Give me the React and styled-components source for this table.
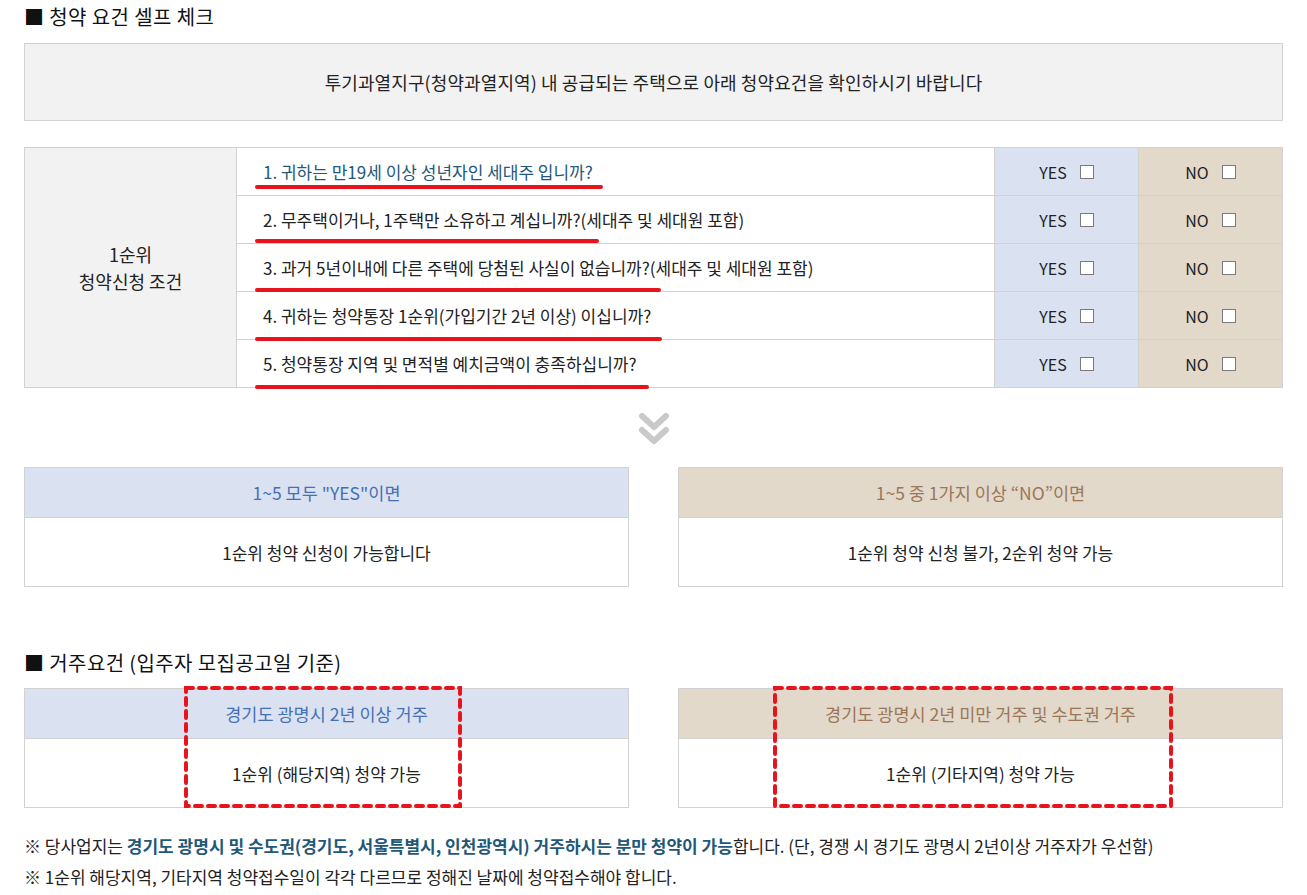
import React from "react";
import styled, { createGlobalStyle } from "styled-components";

const GlobalStyle = createGlobalStyle`
  html, body {
    margin: 0;
    padding: 0;
    background: #fff;
  }
  body {
    font-family: "Noto Sans CJK KR", "Noto Sans", sans-serif;
    color: #222;
  }
`;

const Page = styled.div`
  padding: 5px 24px 0;
  width: 1259px;
`;

const SectionTitle = styled.h2`
  margin: ${(p) => p.$top || 0}px 0 0;
  font-size: 20px;
  font-weight: 400;
  line-height: 24px;
  letter-spacing: 0.4px;
  color: #111;
`;

const Notice = styled.div`
  margin-top: 14px;
  height: 76px;
  display: flex;
  align-items: center;
  justify-content: center;
  background: #f2f2f2;
  border: 1px solid #d2d2d2;
  font-size: 18px;
  letter-spacing: 0.1px;
  color: #222;
`;

const Table = styled.div`
  margin-top: 26px;
  display: grid;
  grid-template-columns: 212px 1fr 144px 144px;
  grid-template-rows: repeat(5, 48px);
  border-top: 1px solid #d2d2d2;
  border-left: 1px solid #d2d2d2;
`;

const Cell = styled.div`
  border-right: 1px solid #d2d2d2;
  border-bottom: 1px solid #d2d2d2;
  display: flex;
  align-items: center;
  font-size: 17px;
`;

const GroupCell = styled(Cell)`
  grid-row: 1 / span 5;
  flex-direction: column;
  justify-content: center;
  background: #f2f2f2;
  font-size: 18px;
  line-height: 27px;
  text-align: center;
  color: #222;
`;

const QuestionCell = styled(Cell)`
  position: relative;
  padding-left: 26px;
  color: ${(p) => (p.$active ? "#23587a" : "#222")};
`;

const Underline = styled.span`
  position: absolute;
  left: 18px;
  top: ${(p) => p.$top}px;
  width: ${(p) => p.$w}px;
  height: 4px;
  border-radius: 2px;
  background: #e8141b;
  z-index: 2;
`;

const AnswerCell = styled(Cell)`
  justify-content: center;
  gap: 13px;
  background: ${(p) => (p.$no ? "#e2d9ca" : "#dae2f2")};
  color: #222;
  font-size: 16px;
`;

const Box = styled.span`
  width: 12px;
  height: 12px;
  background: #fff;
  border: 1px solid #7a7a7a;
`;

const Arrow = styled.div`
  display: flex;
  justify-content: center;
  padding: 24px 0 19px;
`;

const Pair = styled.div`
  display: grid;
  grid-template-columns: 1fr 1fr;
  gap: 49px;
  margin-top: ${(p) => p.$top || 0}px;
`;

const ResultBox = styled.div`
  position: relative;
  border: 1px solid #d2d2d2;
`;

const ResultHead = styled.div`
  height: 49px;
  display: flex;
  align-items: center;
  justify-content: center;
  border-bottom: 1px solid #d2d2d2;
  background: ${(p) => (p.$no ? "#e2d9ca" : "#dae2f2")};
  color: ${(p) => (p.$no ? "#9c7659" : "#4670b4")};
  font-size: 17.5px;
`;

const ResultBody = styled.div`
  height: 68px;
  display: flex;
  align-items: center;
  justify-content: center;
  font-size: 17px;
  color: #222;
`;

const Dashed = styled.svg`
  position: absolute;
  top: -3px;
  left: ${(p) => p.$left}px;
  z-index: 2;
  overflow: visible;
`;

const Notes = styled.div`
  margin-top: 22px;
  font-size: 17px;
  line-height: 31px;
  color: #222;
`;

const Strong = styled.b`
  color: #1f5878;
  font-weight: 700;
`;

const questions = [
  { text: "1. 귀하는 만19세 이상 성년자인 세대주 입니까?", top: 37, w: 348, active: true },
  { text: "2. 무주택이거나, 1주택만 소유하고 계십니까?(세대주 및 세대원 포함)", top: 43, w: 344 },
  { text: "3. 과거 5년이내에 다른 주택에 당첨된 사실이 없습니까?(세대주 및 세대원 포함)", top: 44, w: 406 },
  { text: "4. 귀하는 청약통장 1순위(가입기간 2년 이상) 이십니까?", top: 45, w: 407 },
  { text: "5. 청약통장 지역 및 면적별 예치금액이 충족하십니까?", top: 45, w: 394 },
];

const DashRect = ({ left, width, height }) => (
  <Dashed $left={left} width={width} height={height} viewBox={`0 0 ${width} ${height}`}>
    <rect
      x="2"
      y="2"
      width={width - 4}
      height={height - 4}
      fill="none"
      stroke="#e8141b"
      strokeWidth="4"
      strokeDasharray="7 6"
      strokeLinecap="round"
    />
  </Dashed>
);

const App = () => {
  return (
    <Page>
      <GlobalStyle />
      <SectionTitle>■ 청약 요건 셀프 체크</SectionTitle>
      <Notice>투기과열지구(청약과열지역) 내 공급되는 주택으로 아래 청약요건을 확인하시기 바랍니다</Notice>

      <Table>
        <GroupCell>
          <span>1순위</span>
          <span>청약신청 조건</span>
        </GroupCell>
        {questions.map((q, i) => (
          <React.Fragment key={i}>
            <QuestionCell style={{ gridRow: i + 1, gridColumn: 2 }} $active={q.active}>
              {q.text}
              <Underline $top={q.top} $w={q.w} />
            </QuestionCell>
            <AnswerCell style={{ gridRow: i + 1, gridColumn: 3 }}>
              YES <Box />
            </AnswerCell>
            <AnswerCell style={{ gridRow: i + 1, gridColumn: 4 }} $no>
              NO <Box />
            </AnswerCell>
          </React.Fragment>
        ))}
      </Table>

      <Arrow>
        <svg width="34" height="36" viewBox="0 0 34 36">
          <path d="M5 4 L17 15 L29 4" fill="none" stroke="#c9c9c9" strokeWidth="6" strokeLinecap="round" strokeLinejoin="round" />
          <path d="M5 18 L17 29 L29 18" fill="none" stroke="#c9c9c9" strokeWidth="6" strokeLinecap="round" strokeLinejoin="round" />
        </svg>
      </Arrow>

      <Pair>
        <ResultBox>
          <ResultHead>1~5 모두 "YES"이면</ResultHead>
          <ResultBody>1순위 청약 신청이 가능합니다</ResultBody>
        </ResultBox>
        <ResultBox>
          <ResultHead $no>1~5 중 1가지 이상 “NO”이면</ResultHead>
          <ResultBody>1순위 청약 신청 불가, 2순위 청약 가능</ResultBody>
        </ResultBox>
      </Pair>

      <SectionTitle $top={64}>■ 거주요건 (입주자 모집공고일 기준)</SectionTitle>

      <Pair $top={13}>
        <ResultBox>
          <ResultHead>경기도 광명시 2년 이상 거주</ResultHead>
          <ResultBody>1순위 (해당지역) 청약 가능</ResultBody>
          <DashRect left={159} width={278} height={122} />
        </ResultBox>
        <ResultBox>
          <ResultHead $no>경기도 광명시 2년 미만 거주 및 수도권 거주</ResultHead>
          <ResultBody>1순위 (기타지역) 청약 가능</ResultBody>
          <DashRect left={94} width={400} height={122} />
        </ResultBox>
      </Pair>

      <Notes>
        <div>
          ※ 당사업지는 <Strong>경기도 광명시 및 수도권(경기도, 서울특별시, 인천광역시) 거주하시는 분만 청약이 가능</Strong>합니다. (단, 경쟁 시 경기도 광명시 2년이상 거주자가 우선함)
        </div>
        <div>※ 1순위 해당지역, 기타지역 청약접수일이 각각 다르므로 정해진 날짜에 청약접수해야 합니다.</div>
      </Notes>
    </Page>
  );
};

export default App;
